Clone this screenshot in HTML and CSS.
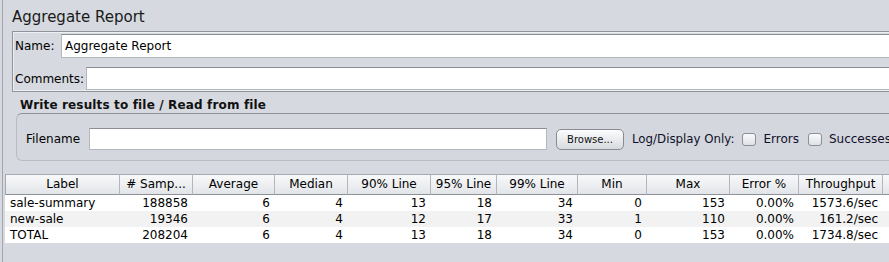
FILE: index.html
```html
<!DOCTYPE html>
<html>
<head>
<meta charset="utf-8">
<link rel="stylesheet" href="styles.css">
</head>
<body>
<div class="frame">
  <div class="title">Aggregate Report</div>
  <div class="panel">
    <div class="row">
      <span class="lbl lbl-name">Name:</span>
      <div class="field field-name">Aggregate Report</div>
    </div>
    <div class="row row-comments">
      <span class="lbl lbl-comments">Comments:</span>
      <div class="field field-comments"></div>
    </div>
  </div>
  <div class="group-title">Write results to file / Read from file</div>
  <div class="group">
    <span class="lbl lbl-file">Filename</span>
    <div class="field field-file"></div>
    <div class="btn">Browse...</div>
    <span class="lbl lbl-log">Log/Display Only:</span>
    <span class="check"></span>
    <span class="lbl lbl-check">Errors</span>
    <span class="check"></span>
    <span class="lbl lbl-check">Successes</span>
  </div>
  <div class="table">
    <div class="hdr first">Label</div>
    <div class="hdr"># Samp...</div>
    <div class="hdr">Average</div>
    <div class="hdr">Median</div>
    <div class="hdr">90% Line</div>
    <div class="hdr">95% Line</div>
    <div class="hdr">99% Line</div>
    <div class="hdr">Min</div>
    <div class="hdr">Max</div>
    <div class="hdr">Error %</div>
    <div class="hdr">Throughput</div>
    <div class="hdr"></div>

    <div class="c l">sale-summary</div>
    <div class="c">188858</div>
    <div class="c">6</div>
    <div class="c">4</div>
    <div class="c">13</div>
    <div class="c">18</div>
    <div class="c">34</div>
    <div class="c">0</div>
    <div class="c">153</div>
    <div class="c">0.00%</div>
    <div class="c">1573.6/sec</div>
    <div class="c"></div>

    <div class="c l alt">new-sale</div>
    <div class="c alt">19346</div>
    <div class="c alt">6</div>
    <div class="c alt">4</div>
    <div class="c alt">12</div>
    <div class="c alt">17</div>
    <div class="c alt">33</div>
    <div class="c alt">1</div>
    <div class="c alt">110</div>
    <div class="c alt">0.00%</div>
    <div class="c alt">161.2/sec</div>
    <div class="c alt"></div>

    <div class="c l">TOTAL</div>
    <div class="c">208204</div>
    <div class="c">6</div>
    <div class="c">4</div>
    <div class="c">13</div>
    <div class="c">18</div>
    <div class="c">34</div>
    <div class="c">0</div>
    <div class="c">153</div>
    <div class="c">0.00%</div>
    <div class="c">1734.8/sec</div>
    <div class="c"></div>
  </div>
</div>
</body>
</html>
```
FILE: styles.css
```css
html, body {
  margin: 0;
  padding: 0;
  background: #d6d9df;
  overflow: hidden;
  width: 889px;
  height: 262px;
}
body {
  font-family: "DejaVu Sans", sans-serif;
  font-size: 12px;
  color: #000;
}
.frame {
  margin-left: 2px;
  border-left: 1px solid #a3a7ad;
  height: 262px;
  box-sizing: border-box;
}
.title {
  margin-left: 9px;
  padding-top: 8px;
  font-size: 15px;
  line-height: 18px;
  color: #1a1a1a;
  white-space: nowrap;
}
.panel {
  margin-top: 5px;
  margin-left: 9px;
  width: 900px;
  border: 1px solid #8f939a;
  box-shadow: inset 0 0 0 1px #eceef1;
  padding: 2px 0 1px 1px;
  display: flex;
  flex-direction: column;
  gap: 9px;
}
.row {
  display: flex;
  align-items: center;
  height: 24px;
}
.row-comments {
  height: 23px;
}
.lbl {
  white-space: nowrap;
  line-height: 14px;
}
.lbl-name {
  width: 47px;
  padding-left: 1px;
  box-sizing: border-box;
}
.lbl-comments {
  width: 72px;
  padding-left: 1px;
  box-sizing: border-box;
}
.field {
  background: #fff;
  border: 1px solid #b4b7bc;
  border-top-color: #8a8e94;
  box-sizing: border-box;
  height: 100%;
  flex: 1;
  padding-left: 3px;
  display: flex;
  align-items: center;
  white-space: nowrap;
}
.group-title {
  margin-top: 6px;
  margin-left: 17px;
  font-weight: bold;
  line-height: 15px;
  color: #111;
  white-space: nowrap;
  letter-spacing: 0.15px;
}
.group {
  margin-left: 13px;
  width: 900px;
  box-sizing: border-box;
  border: 1px solid #b9bcc2;
  border-top-color: #8d9197;
  border-radius: 6px;
  padding: 14px 0 10px 9px;
  display: flex;
  align-items: center;
  background: #d4d7dd;
}
.lbl-file {
  width: 63px;
}
.field-file {
  flex: none;
  width: 458px;
  height: 22px;
}
.btn {
  margin-left: 9px;
  width: 68px;
  height: 21px;
  box-sizing: border-box;
  border: 1px solid #888c92;
  border-radius: 5px;
  background: linear-gradient(#fcfcfd, #e6e8eb 60%, #d7dadf);
  font-size: 10px;
  display: flex;
  align-items: center;
  justify-content: center;
  color: #111;
}
.lbl-log {
  margin-left: 8px;
  font-size: 11.8px;
  color: #10102a;
}
.check {
  margin-left: 8px;
  width: 14px;
  height: 13px;
  box-sizing: border-box;
  border: 1px solid #8c9096;
  border-radius: 3px;
  background: linear-gradient(#fbfbfc, #dde0e5);
}
.lbl-check {
  margin-left: 7px;
  margin-right: 1px;
  color: #10102a;
}
.table {
  margin-top: 13px;
  margin-left: 2px;
  display: grid;
  grid-template-columns: 115px 73px 82px 73px 83px 66px 81px 69px 83px 69px 84px 60px;
  width: 954px;
}
.hdr {
  height: 21px;
  box-sizing: border-box;
  border-top: 1px solid #a6aab0;
  border-bottom: 1px solid #8d9197;
  border-right: 1px solid #b3b7bd;
  background: linear-gradient(#f8f9fa, #e9ebee 70%, #e1e4e8);
  text-align: center;
  line-height: 19px;
  white-space: nowrap;
  overflow: hidden;
}
.hdr.first {
  border-left: 1px solid #a3a7ad;
}
.c {
  background: #fff;
  height: 16px;
  line-height: 16px;
  text-align: right;
  padding-right: 5px;
  white-space: nowrap;
  overflow: hidden;
}
.c.l {
  text-align: left;
  padding-left: 5px;
  padding-right: 0;
}
.c.alt {
  background: #f2f2f2;
}
```
